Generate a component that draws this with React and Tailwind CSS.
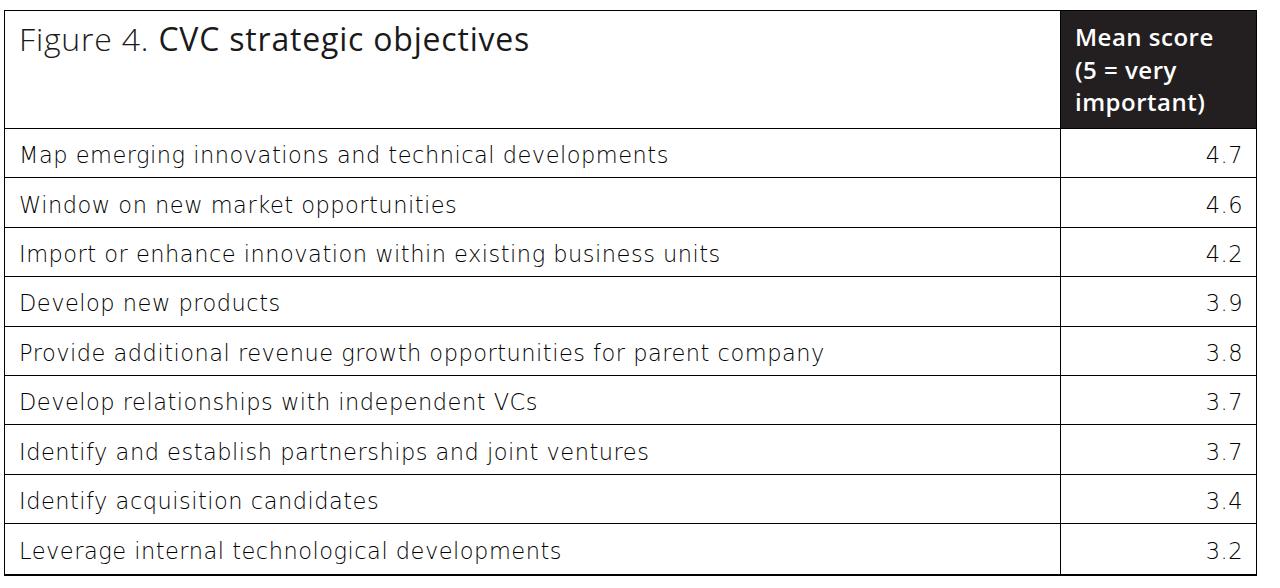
import React from 'react'

const rows = [
  ['Map emerging innovations and technical developments', '4.7'],
  ['Window on new market opportunities', '4.6'],
  ['Import or enhance innovation within existing business units', '4.2'],
  ['Develop new products', '3.9'],
  ['Provide additional revenue growth opportunities for parent company', '3.8'],
  ['Develop relationships with independent VCs', '3.7'],
  ['Identify and establish partnerships and joint ventures', '3.7'],
  ['Identify acquisition candidates', '3.4'],
  ['Leverage internal technological developments', '3.2'],
]

const App = () => {
  return (
    <div className="w-[1280px] h-[588px] bg-white pt-[10px] pl-[4px]" style={{ fontFamily: '"Open Sans", "Noto Sans", sans-serif' }}>
      <div className="w-[1253px] border border-black border-b-2 text-[#1a1a1a]">
        {/* Header */}
        <div className="flex h-[118px] border-b border-black">
          <div className="flex-1 pl-[14px] pt-[8px] text-[32px] leading-[40px] tracking-[0.8px] whitespace-nowrap">
            <span className="font-light">Figure 4. </span>
            <span className="font-medium">CVC strategic objectives</span>
          </div>
          <div className="w-[196px] border-l border-black bg-[#231f20] text-white pl-[14px] pt-[10px] text-[24px] leading-[32.5px] tracking-[0.5px] font-semibold">
            Mean score<br />(5 = very<br />important)
          </div>
        </div>

        {/* Rows */}
        {rows.map(([label, score], i) => (
          <div
            key={i}
            className={`flex h-[49.4px] font-['DejaVu_Sans',sans-serif] font-extralight text-black ${i < rows.length - 1 ? 'border-b border-black' : ''}`}
          >
            <div className="flex-1 flex items-center pl-[14px] pt-[6px] text-[22.5px] tracking-[0.5px] whitespace-nowrap">{label}</div>
            <div className="w-[196px] border-l border-black flex items-center justify-end pr-[13px] pt-[6px] text-[22.5px] tracking-[0.5px]">
              {score}
            </div>
          </div>
        ))}
      </div>
    </div>
  )
}

export default App
